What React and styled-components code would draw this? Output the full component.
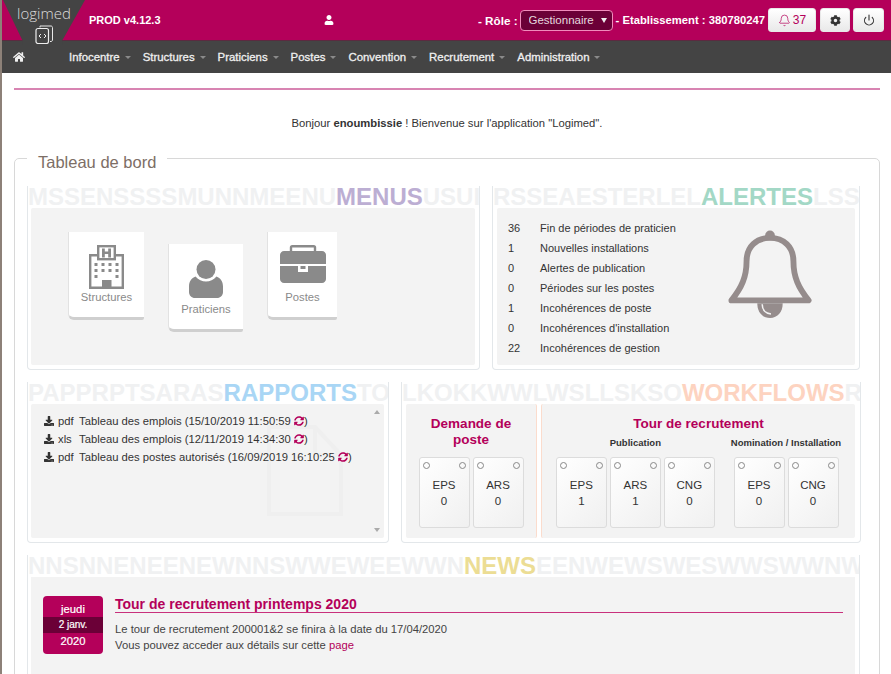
import React from "react";
import styled, { createGlobalStyle } from "styled-components";
import { FaUser, FaHome, FaCog, FaDownload, FaSyncAlt } from "react-icons/fa";
import { Bell, Power } from "lucide-react";

const Global = createGlobalStyle`
  html, body {
    margin: 0;
    height: 674px;
    overflow: hidden;
    background: #fff;
  }
  body {
    font-family: "Liberation Sans", Arial, sans-serif;
    font-size: 11.25px;
    color: #333;
    border-left: 2px solid #8d8178;
  }
`;

const menus = ["Infocentre", "Structures", "Praticiens", "Postes", "Convention", "Recrutement", "Administration"];

const alerts = [
  [36, "Fin de périodes de praticien"],
  [1, "Nouvelles installations"],
  [0, "Alertes de publication"],
  [0, "Périodes sur les postes"],
  [1, "Incohérences de poste"],
  [0, "Incohérences d'installation"],
  [22, "Incohérences de gestion"],
];

const reports = [
  ["pdf", "Tableau des emplois (15/10/2019 11:50:59"],
  ["xls", "Tableau des emplois (12/11/2019 14:34:30"],
  ["pdf", "Tableau des postes autorisés (16/09/2019 16:10:25"],
];

function Hospital() {
  return (
    <svg width="35" height="44" viewBox="0 0 35 44">
      <rect x="9.200" y="1.200" width="16.600" height="13" fill="#fff" stroke="#8a8a8a" strokeWidth="2.400" />
      <path fill="#8a8a8a" d="M13 3.500h2.800v3h3.400v-3H22v9h-2.800V9h-3.400v3.500H13z" />
      <path fill="none" stroke="#8a8a8a" strokeWidth="2.400" d="M9 10.200H1.200v32.600h32.600V10.200H26" />
      <path
        fill="#8a8a8a"
        d="M5.500 18h3v3h-3zm7 0h3v3h-3zm7 0h3v3h-3zm7 0h3v3h-3zM5.500 24h3v3h-3zm7 0h3v3h-3zm7 0h3v3h-3zm7 0h3v3h-3zM5.500 30h3v3h-3zm21 0h3v3h-3zM13 35h9.500v8H13z"
      />
    </svg>
  );
}

function Person() {
  return (
    <svg width="34" height="41" viewBox="0 -3 34 41">
      <circle cx="17" cy="9.500" r="9.500" fill="#8a8a8a" />
      <path
        fill="#8a8a8a"
        d="M6.500 16.500c3 3.400 6.500 5 10.500 5s7.500-1.600 10.500-5c4 1.500 6.500 5 6.500 10v5.500c0 3.400-2.600 6-6 6H6c-3.400 0-6-2.600-6-6v-5.500c0-5 2.500-8.500 6.500-10z"
      />
    </svg>
  );
}

function Suitcase() {
  return (
    <svg width="46" height="38" viewBox="0 0 46 38">
      <path fill="none" stroke="#8a8a8a" strokeWidth="2.400" d="M11 7V2.500c0-.7.600-1.300 1.300-1.300h21.400c.7 0 1.300.6 1.300 1.300V7" />
      <path fill="#8a8a8a" d="M4 6h38c2.200 0 4 1.800 4 4v9H0v-9c0-2.200 1.800-4 4-4z" />
      <path fill="#8a8a8a" d="M0 21h46v13c0 2.200-1.800 4-4 4H4c-2.200 0-4-1.800-4-4z" />
      <path fill="#fff" d="M18 19h10v8H18z" />
      <path fill="#8a8a8a" d="M20.500 21h5v3h-5z" />
    </svg>
  );
}

function BigBell() {
  return (
    <svg width="84" height="90" viewBox="0 0 86 92">
      <path
        fill="none"
        stroke="#958c8c"
        strokeWidth="6"
        strokeLinejoin="round"
        d="M3.500 72C14 59 19 48 19 32 19 17 29 8 43 8s24 9 24 24c0 16 5 27 15.500 40z"
      />
      <circle cx="43" cy="5.500" r="5" fill="#958c8c" />
      <path fill="#958c8c" d="M30 75h26c0 9-5 15-13 15s-13-6-13-15z" />
      <path fill="none" stroke="#f3f3f3" strokeWidth="1.600" d="M35 76c0 6 4 9.500 9 10" />
    </svg>
  );
}

function FileMark() {
  return (
    <svg width="76" height="91" viewBox="0 0 76 91">
      <path fill="none" stroke="#efefef" strokeWidth="4" d="M2 2h46l26 28v59H2zM48 2v28h26" />
    </svg>
  );
}

function Device() {
  return (
    <svg width="18" height="19" viewBox="0 0 18 19">
      <path fill="none" stroke="#e8e8e8" d="M5 2.500V1h11c.8 0 1.500.7 1.500 1.500V15c0 .8-.7 1.500-1.500 1.500h-1" />
      <rect x="1" y="3.500" width="12.500" height="15" rx="2" fill="none" stroke="#eee" strokeWidth="1.200" />
      <path fill="none" stroke="#eee" d="M6 9l-2 2 2 2M9 9l2 2-2 2" />
    </svg>
  );
}

function Card({ label, value }) {
  return (
    <CardBox>
      <HoleRow>
        <Hole />
        <Hole />
      </HoleRow>
      <CardLabel>{label}</CardLabel>
      <span>{value}</span>
    </CardBox>
  );
}

function PanelTitle({ before, word, after, color }) {
  return (
    <TitleRow>
      {before}
      <TitleWord $color={color}>{word}</TitleWord>
      {after}
    </TitleRow>
  );
}

export default function App() {
  return (
    <>
      <Global />
      <Header>
        <Logo>
          <LogoText>logimed</LogoText>
          <Device />
        </Logo>
        <Version>PROD v4.12.3</Version>
        <UserSlot>
          <FaUser size={10} />
        </UserSlot>
        <RightGroup>
          <span>- Rôle :</span>
          <SelectWrap>
            <RoleSelect defaultValue="Gestionnaire">
              <option>Gestionnaire</option>
            </RoleSelect>
            <SelectCaret />
          </SelectWrap>
          <Establishment>- Etablissement : 380780247</Establishment>
          <BellButton>
            <Bell size={13} strokeWidth={1.3} /> 37
          </BellButton>
          <IconButton $width={30}>
            <FaCog size={11} />
          </IconButton>
          <IconButton $width={31}>
            <Power size={12} strokeWidth={2.2} />
          </IconButton>
        </RightGroup>
      </Header>
      <Nav>
        <HomeLink>
          <FaHome size={12} />
        </HomeLink>
        {menus.map((m) => (
          <NavItem key={m}>
            {m}
            <NavCaret />
          </NavItem>
        ))}
      </Nav>
      <Content>
        <Rule />
        <Greeting>
          Bonjour <b>enoumbissie</b> ! Bienvenue sur l'application "Logimed".
        </Greeting>
        <Board>
          <BoardLegend>Tableau de bord</BoardLegend>
          <Row $cols="453px 368px">
            <Panel>
              <PanelTitle before="MSSENSSSSMUNNMEENU" word="MENUS" after="USUI" color="#bcaed3" />
              <MenuBody>
                <Tile $width={76}>
                  <TileIcon>
                    <Hospital />
                  </TileIcon>
                  <TileLabel>Structures</TileLabel>
                </Tile>
                <Tile $width={75} $drop={12}>
                  <TileIcon>
                    <Person />
                  </TileIcon>
                  <TileLabel>Praticiens</TileLabel>
                </Tile>
                <Tile $width={70}>
                  <TileIcon>
                    <Suitcase />
                  </TileIcon>
                  <TileLabel>Postes</TileLabel>
                </Tile>
              </MenuBody>
            </Panel>
            <Panel>
              <PanelTitle before="RSSEAESTERLEL" word="ALERTES" after="LSS" color="#a3d8c6" />
              <AlertBody>
                <AlertList>
                  {alerts.map(([n, text]) => (
                    <AlertRow key={text}>
                      <AlertCount>{n}</AlertCount>
                      {text}
                    </AlertRow>
                  ))}
                </AlertList>
                <BellSlot>
                  <BigBell />
                </BellSlot>
              </AlertBody>
            </Panel>
          </Row>
          <Row $cols="362px 460px">
            <Panel>
              <PanelTitle before="PAPPRPTSARAS" word="RAPPORTS" after="TO" color="#a9d6f5" />
              <ReportBody>
                <FileOverlay>
                  <FileMark />
                </FileOverlay>
                <ReportList>
                  {reports.map(([kind, text]) => (
                    <ReportRow key={text}>
                      <FaDownload size={10} />
                      <ReportKind>{kind}</ReportKind>
                      <span>
                        {text} <SyncIcon size={10} />)
                      </span>
                    </ReportRow>
                  ))}
                </ReportList>
                <Scrollbar>
                  <Arrow />
                  <Arrow $down />
                </Scrollbar>
              </ReportBody>
            </Panel>
            <Panel>
              <PanelTitle before="LKOKKWWLWSLLSKSO" word="WORKFLOWS" after="R" color="#fdd3c0" />
              <FlowBody>
                <FlowGroup $width={131}>
                  <FlowTitle>Demande de poste</FlowTitle>
                  <Cards>
                    <Card label="EPS" value={0} />
                    <Card label="ARS" value={0} />
                  </Cards>
                </FlowGroup>
                <FlowGroup $grow>
                  <FlowTitle>Tour de recrutement</FlowTitle>
                  <Stages>
                    <Stage>
                      <StageTitle>Publication</StageTitle>
                      <Cards>
                        <Card label="EPS" value={1} />
                        <Card label="ARS" value={1} />
                        <Card label="CNG" value={0} />
                      </Cards>
                    </Stage>
                    <Stage>
                      <StageTitle>Nomination / Installation</StageTitle>
                      <Cards>
                        <Card label="EPS" value={0} />
                        <Card label="CNG" value={0} />
                      </Cards>
                    </Stage>
                  </Stages>
                </FlowGroup>
              </FlowBody>
            </Panel>
          </Row>
          <Panel>
            <PanelTitle before="NNSNNENEENEWNNSWWEWEEWWN" word="NEWS" after="EENWEWSWESWWSWWNW" color="#ecdd94" />
            <NewsBody>
              <DateBox>
                <span>jeudi</span>
                <DateMiddle>2 janv.</DateMiddle>
                <span>2020</span>
              </DateBox>
              <NewsText>
                <NewsTitle>Tour de recrutement printemps 2020</NewsTitle>
                <p>
                  Le tour de recrutement 200001&amp;2 se finira à la date du 17/04/2020
                  <br />
                  Vous pouvez acceder aux détails sur cette <NewsLink href="#">page</NewsLink>
                </p>
              </NewsText>
            </NewsBody>
          </Panel>
        </Board>
      </Content>
    </>
  );
}

const Header = styled.header`
  height: 40px;
  background: #b4005a;
  border-bottom: 1px solid #5c2a40;
  display: flex;
  align-items: center;
  color: #fff;
  font-size: 11.7px;
  font-weight: bold;
`;

const Logo = styled.div`
  position: relative;
  z-index: 1;
  align-self: flex-start;
  width: 82px;
  height: 45px;
  margin-left: 1px;
  background: #444;
  clip-path: polygon(0 0, 100% 0, 72% 41px, 72% 100%, 24% 100%, 24% 41px);
  display: flex;
  flex-direction: column;
  align-items: center;
  gap: 2px;
  flex-shrink: 0;
`;

const LogoText = styled.span`
  font-family: "Open Sans", sans-serif;
  font-weight: 300;
  font-size: 15px;
  line-height: 20px;
  margin-top: 3px;
  color: #ddd;
`;

const Version = styled.span`
  margin-left: 4px;
  font-size: 11px;
`;

const UserSlot = styled.span`
  margin-left: 163px;
  display: flex;
`;

const RightGroup = styled.div`
  margin-left: auto;
  margin-right: 7px;
  display: flex;
  align-items: center;
  gap: 2px;
`;

const Establishment = styled.span`
  font-size: 11.25px;
  margin: 0 1px;
`;

const SelectWrap = styled.span`
  position: relative;
  display: flex;
`;

const RoleSelect = styled.select`
  appearance: none;
  height: 21px;
  width: 93px;
  margin: 0;
  background: #6b0037;
  color: #e4d8de;
  border: 1px solid #f08cbc;
  border-radius: 4px;
  font-family: inherit;
  font-size: 11.5px;
  padding-left: 8px;
`;

const SelectCaret = styled.span`
  position: absolute;
  right: 6px;
  top: 8px;
  border-left: 3px solid transparent;
  border-right: 3px solid transparent;
  border-top: 5px solid #eee;
  pointer-events: none;
`;

const ButtonBase = styled.button`
  height: 24px;
  border: 1px solid #e8e8e8;
  border-radius: 3px;
  background: linear-gradient(#fff, #e9e9e9);
  color: #333;
  display: flex;
  align-items: center;
  justify-content: center;
  padding: 0;
  font-family: inherit;
  font-size: 12px;
`;

const BellButton = styled(ButtonBase)`
  width: 48px;
  margin-right: 2px;
  color: #b4005a;
  gap: 2px;
`;

const IconButton = styled(ButtonBase)`
  width: ${(p) => p.$width}px;
  & + & {
    margin-left: 1px;
  }
`;

const Nav = styled.nav`
  height: 32px;
  background: #444;
  display: flex;
  align-items: center;
  color: #f0f0f0;
  padding-left: 11px;
  font-size: 11.4px;
  -webkit-text-stroke: 0.3px #f0f0f0;
`;

const HomeLink = styled.span`
  display: flex;
  width: 56px;
`;

const NavItem = styled.span`
  display: flex;
  align-items: center;
  gap: 5px;
  margin-right: 12px;
`;

const NavCaret = styled.span`
  border-left: 3px solid transparent;
  border-right: 3px solid transparent;
  border-top: 3px solid #8a8a8a;
`;

const Content = styled.main`
  padding: 0 11px 0 12px;
`;

const Rule = styled.div`
  height: 2px;
  background: #d884b2;
  margin-top: 15px;
`;

const Greeting = styled.p`
  margin: 0;
  padding-top: 26px;
  height: 28px;
  text-align: center;
  line-height: 14px;
`;

const Board = styled.fieldset`
  margin: 0;
  padding: 14px 19px 0 12px;
  border: 1px solid #d8d8d8;
  border-radius: 5px;
  display: flex;
  flex-direction: column;
  gap: 12px;
  min-width: 0;
`;

const BoardLegend = styled.legend`
  padding: 8px 11px 0;
  font-size: 16.5px;
  line-height: 20px;
  color: #7d6e66;
`;

const Row = styled.div`
  display: grid;
  grid-template-columns: ${(p) => p.$cols};
  column-gap: 12px;
`;

const Panel = styled.section`
  border: 1px solid #e3e7ea;
  border-top: 0;
  border-radius: 0 0 4px 4px;
  padding: 0 4px 4px 3px;
  min-width: 0;
`;

const TitleRow = styled.div`
  font-size: 24px;
  font-weight: bold;
  line-height: 22px;
  height: 22px;
  color: #f0f1f2;
  white-space: nowrap;
  overflow: hidden;
  margin: 0 -4px 0 -3px;
`;

const TitleWord = styled.span`
  color: ${(p) => p.$color};
`;

const MenuBody = styled.div`
  background: #f3f3f3;
  height: 157px;
  box-sizing: border-box;
  padding: 24px 0 0 37px;
  display: flex;
  align-items: flex-start;
  gap: 24px;
  border-radius: 2px;
`;

const Tile = styled.div`
  width: ${(p) => p.$width}px;
  height: 88px;
  box-sizing: border-box;
  margin-top: ${(p) => p.$drop || 0}px;
  padding-top: 13px;
  background: #fff;
  border-bottom: 3px solid #cfcfcf;
  border-left: 1px solid #e2e2e2;
  border-radius: 0 0 2px 6px;
  display: flex;
  flex-direction: column;
  align-items: center;
`;

const TileIcon = styled.div`
  height: 45px;
`;

const TileLabel = styled.span`
  color: #8a8a8a;
  line-height: 14px;
`;

const AlertBody = styled.div`
  background: #f3f3f3;
  height: 157px;
  box-sizing: border-box;
  margin-left: 1px;
  padding: 10px 0 0 11px;
  display: flex;
  gap: 40px;
  border-radius: 2px;
  font-size: 11px;
`;

const AlertList = styled.div`
  width: 180px;
`;

const AlertRow = styled.div`
  height: 20px;
  line-height: 20px;
  display: flex;
  white-space: nowrap;
`;

const AlertCount = styled.span`
  width: 32px;
`;

const BellSlot = styled.div`
  padding-top: 12px;
`;

const ReportBody = styled.div`
  position: relative;
  background: #f3f3f3;
  height: 134px;
  display: flex;
  justify-content: space-between;
  border-radius: 2px;
`;

const FileOverlay = styled.div`
  position: absolute;
  left: 236px;
  top: 21px;
`;

const ReportList = styled.div`
  position: relative;
  padding: 8px 0 0 13px;
`;

const ReportRow = styled.div`
  height: 18px;
  line-height: 18px;
  display: flex;
  align-items: center;
  white-space: nowrap;
`;

const ReportKind = styled.span`
  margin-left: 4px;
  width: 21px;
`;

const SyncIcon = styled(FaSyncAlt)`
  color: #b4005a;
  vertical-align: -1px;
`;

const Scrollbar = styled.div`
  width: 14px;
  padding: 6px 0;
  display: flex;
  flex-direction: column;
  justify-content: space-between;
  align-items: center;
  position: relative;
`;

const Arrow = styled.span`
  border-left: 3px solid transparent;
  border-right: 3px solid transparent;
  ${(p) => (p.$down ? "border-top: 4px solid #aaa;" : "border-bottom: 4px solid #aaa;")}
`;

const FlowBody = styled.div`
  height: 134px;
  margin: 0 1px;
  display: flex;
  gap: 4px;
`;

const FlowGroup = styled.div`
  background: #f3f3f3;
  border-right: ${(p) => (p.$grow ? "0" : "1px solid #fbdccd")};
  border-left: ${(p) => (p.$grow ? "1px solid #fbdccd" : "0")};
  border-radius: 2px;
  width: ${(p) => (p.$width ? `${p.$width}px` : "auto")};
  flex: ${(p) => (p.$grow ? "1" : "none")};
  box-sizing: border-box;
  padding: 12px 0 10px;
  display: flex;
  flex-direction: column;
  align-items: center;
  justify-content: space-between;
`;

const FlowTitle = styled.div`
  color: #b4005a;
  font-size: 13.5px;
  font-weight: bold;
  line-height: 16px;
  text-align: center;
  padding: 0 10px;
`;

const Stages = styled.div`
  display: flex;
  gap: 16px;
`;

const Stage = styled.div`
  display: flex;
  flex-direction: column;
  align-items: center;
`;

const StageTitle = styled.div`
  font-size: 9.5px;
  font-weight: bold;
  line-height: 14px;
  height: 14px;
  margin-bottom: 7px;
  white-space: nowrap;
`;

const Cards = styled.div`
  display: flex;
  gap: 3px;
`;

const CardBox = styled.div`
  width: 51px;
  height: 71px;
  box-sizing: border-box;
  border: 1px solid #dcdcdc;
  border-radius: 3px;
  background: linear-gradient(135deg, #fff, #f0f0f0);
  display: flex;
  flex-direction: column;
  align-items: center;
  font-size: 11.5px;
  line-height: 16px;
`;

const HoleRow = styled.div`
  display: flex;
  justify-content: space-between;
  align-self: stretch;
  padding: 4px 3px 0;
`;

const Hole = styled.span`
  width: 7px;
  height: 7px;
  box-sizing: border-box;
  border: 1px solid #888;
  border-radius: 50%;
`;

const CardLabel = styled.span`
  margin-top: 8px;
`;

const NewsBody = styled.div`
  background: #f3f3f3;
  height: 140px;
  box-sizing: border-box;
  padding: 19px 12px;
  display: flex;
  gap: 12px;
  align-items: flex-start;
`;

const DateBox = styled.div`
  width: 60px;
  height: 58px;
  background: #b4005a;
  border-radius: 4px;
  color: #fff;
  display: flex;
  flex-direction: column;
  justify-content: center;
  align-items: center;
  line-height: 16px;
  flex-shrink: 0;
  -webkit-text-stroke: 0.2px #fff;
`;

const DateMiddle = styled.span`
  background: #6b0037;
  align-self: stretch;
  text-align: center;
  font-size: 10px;
  line-height: 16px;
`;

const NewsText = styled.div`
  flex: 1;
  p {
    margin: 8px 0 0;
    line-height: 16px;
    color: #444;
  }
`;

const NewsTitle = styled.h3`
  margin: 0;
  color: #b4005a;
  font-size: 14px;
  line-height: 16px;
  border-bottom: 1px solid #c8307c;
`;

const NewsLink = styled.a`
  color: #b4005a;
  text-decoration: none;
`;
